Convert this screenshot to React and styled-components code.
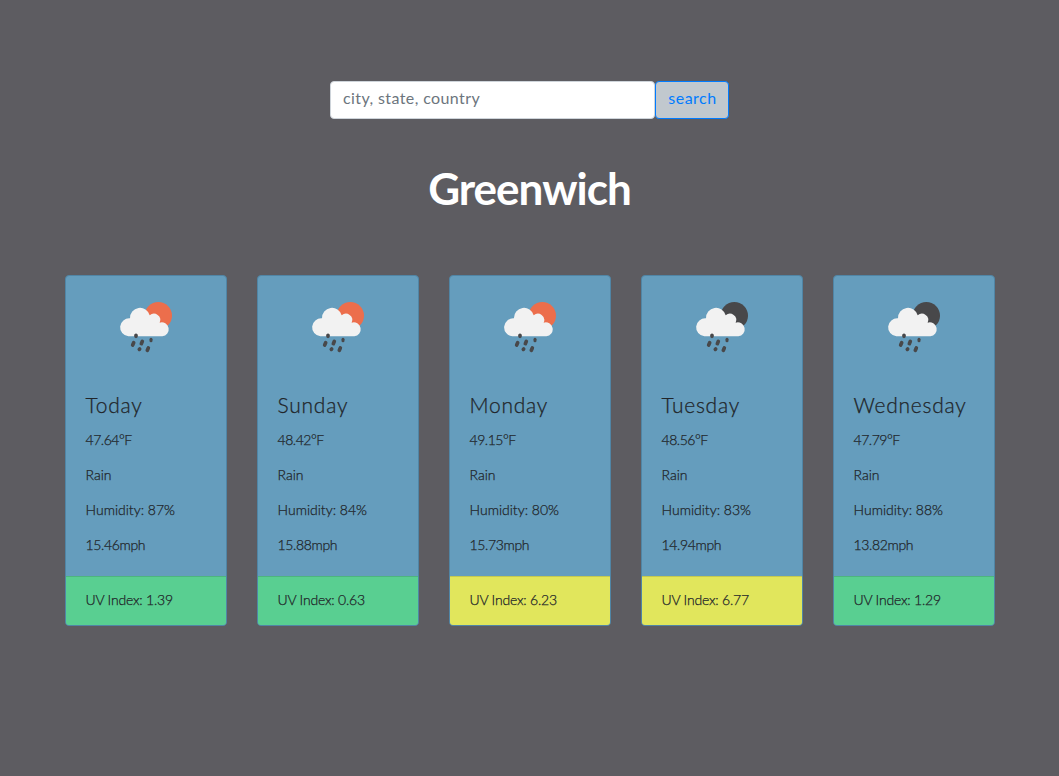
import React from "react";
import styled, { createGlobalStyle } from "styled-components";

const GlobalStyle = createGlobalStyle`
  *, *::before, *::after { box-sizing: border-box; }
  body {
    margin: 0;
    background: #5d5c61;
    color: #212529;
    font-family: Lato, "Open Sans", sans-serif;
    font-size: 16px;
    line-height: 24px;
  }
`;

const Page = styled.main`
  min-height: 776px;
  display: flex;
  flex-direction: column;
  align-items: center;
  padding-top: 81px;
`;

const SearchForm = styled.form`
  display: flex;
  width: 399px;
  height: 38px;
`;

const SearchInput = styled.input`
  flex: 1;
  min-width: 0;
  padding: 4px 12px 8px;
  border: 1px solid #ced4da;
  border-radius: 4px;
  background: #fff;
  font: inherit;
  letter-spacing: 0.4px;
  &::placeholder { color: #6c757d; opacity: 1; }
`;

const SearchButton = styled.button`
  width: 74px;
  padding: 4px 0 8px 1px;
  border: 1px solid #007bff;
  border-radius: 4px;
  background: #c1c8ce;
  color: #007bff;
  font: inherit;
  line-height: 24px;
  letter-spacing: 0.5px;
`;

const City = styled.h1`
  margin: 41px 0 0;
  height: 56px;
  line-height: 56px;
  color: #fff;
  font-size: 44px;
  font-weight: 700;
  letter-spacing: -1px;
`;

const Forecast = styled.section`
  display: flex;
  gap: 30px;
  margin-top: 59px;
`;

const Card = styled.article`
  width: 162px;
  height: 351px;
  display: flex;
  flex-direction: column;
  overflow: hidden;
  border: 1px solid #5085a5;
  border-radius: 4px;
  background: #659dbd;
  font-weight: 300;
  -webkit-text-stroke: 0.25px #212529;
`;

const WeatherIcon = styled.svg`
  flex: none;
  display: block;
  width: 90px;
  height: 70px;
  margin: 14px 0 0 34px;
`;

const CardBody = styled.div`
  flex: 1;
  padding: 33px 0 0 20px;
`;

const Day = styled.h2`
  margin: 0 0 12px;
  font-size: 21px;
  line-height: 24px;
  font-weight: 300;
  letter-spacing: 0.75px;
  white-space: nowrap;
`;

const Reading = styled.p`
  margin: 0 0 14px;
  font-size: 14px;
  line-height: 21px;
  letter-spacing: ${(p) => p.$tracking || 0}px;
`;

const CardFooter = styled.footer`
  flex: none;
  height: 49px;
  padding: 12px 20px;
  border-top: 1px solid rgba(0, 0, 0, 0.125);
  background: ${(p) => (p.$moderate ? "#e1e65c" : "#59cf91")};
  font-size: 14px;
  line-height: 22px;
  letter-spacing: -0.2px;
`;

const DAYS = [
  { day: "Today", temp: "47.64", humidity: 87, wind: "15.46", uv: 1.39 },
  { day: "Sunday", temp: "48.42", humidity: 84, wind: "15.88", uv: 0.63 },
  { day: "Monday", temp: "49.15", humidity: 80, wind: "15.73", uv: 6.23 },
  { day: "Tuesday", temp: "48.56", humidity: 83, wind: "14.94", uv: 6.77, night: true },
  { day: "Wednesday", temp: "47.79", humidity: 88, wind: "13.82", uv: 1.29, night: true },
];

function RainIcon({ night }) {
  return (
    <WeatherIcon viewBox="0 0 270 210" aria-hidden="true">
      <circle cx="175" cy="77" r="41" fill={night ? "#48484a" : "#ec6e4c"} />
      <path
        fill="#f2f2f2"
        d="M85 139 A27 27 0 1 1 90 85 A30 30 0 0 1 149 76 A19 19 0 0 1 179 98 A21 21 0 1 1 187 139 Z"
      />
      <g stroke="#48484a" strokeWidth="11" strokeLinecap="round">
        <path d="M108 136v3M101 158l-3 7M127 154l-3 7M119 177l-1 1M145 174l-3 7" />
        <path d="M153 148v4" strokeWidth="9" />
      </g>
    </WeatherIcon>
  );
}

function ForecastCard({ day, temp, humidity, wind, uv, night }) {
  return (
    <Card>
      <RainIcon night={night} />
      <CardBody>
        <Day>{day}</Day>
        <Reading $tracking={-0.45}>{temp}°F</Reading>
        <Reading>Rain</Reading>
        <Reading>Humidity: {humidity}%</Reading>
        <Reading $tracking={-0.35}>{wind}mph</Reading>
      </CardBody>
      <CardFooter $moderate={uv > 3}>UV Index: {uv}</CardFooter>
    </Card>
  );
}

export default function App() {
  return (
    <Page>
      <GlobalStyle />
      <SearchForm onSubmit={(e) => e.preventDefault()}>
        <SearchInput placeholder="city, state, country" />
        <SearchButton type="submit">search</SearchButton>
      </SearchForm>
      <City>Greenwich</City>
      <Forecast>
        {DAYS.map((d) => (
          <ForecastCard key={d.day} {...d} />
        ))}
      </Forecast>
    </Page>
  );
}
